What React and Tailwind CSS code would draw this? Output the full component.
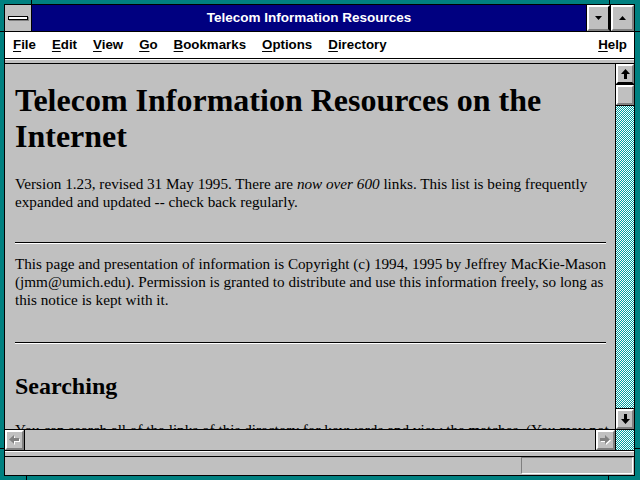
import React from "react";

const serif = { fontFamily: '"Liberation Serif", "Times New Roman", serif' };

function Notch({ className }) {
  return <div className={`absolute bg-black ${className}`} />;
}

function ArrowUp() {
  return (
    <svg width="9" height="10" viewBox="0 0 9 10">
      <polygon points="4.5,0 9,5 6,5 6,10 3,10 3,5 0,5" fill="#000" />
    </svg>
  );
}

function ArrowDown() {
  return (
    <svg width="9" height="10" viewBox="0 0 9 10">
      <polygon points="3,0 6,0 6,5 9,5 4.5,10 0,5 3,5" fill="#000" />
    </svg>
  );
}

function GrayArrow({ dir }) {
  const pts =
    dir === "left"
      ? "0,4.5 5,0 5,3 10,3 10,6 5,6 5,9"
      : "10,4.5 5,0 5,3 0,3 0,6 5,6 5,9";
  return (
    <svg width="11" height="10" viewBox="0 0 11 10">
      <polygon points={pts} fill="#fff" transform="translate(1,1)" />
      <polygon points={pts} fill="#808080" />
    </svg>
  );
}

function Bevel({ className = "", children }) {
  return (
    <div
      className={`flex items-center justify-center bg-[#c0c0c0] border-t-2 border-l-2 border-t-white border-l-white border-b-2 border-r-2 border-b-[#808080] border-r-[#808080] ${className}`}
    >
      {children}
    </div>
  );
}

const menus = [
  ["F", "ile"],
  ["E", "dit"],
  ["V", "iew"],
  ["G", "o"],
  ["B", "ookmarks"],
  ["O", "ptions"],
  ["D", "irectory"],
];

export default function App() {
  return (
    <div className="relative w-[640px] h-[480px] bg-[#008080] pt-[4px] pl-[4px] pr-[5px] pb-[4px]">
      <Notch className="left-[31px] top-0 w-px h-[4px]" />
      <Notch className="left-[609px] top-0 w-px h-[4px]" />
      <Notch className="left-[26px] bottom-0 w-px h-[4px]" />
      <Notch className="left-[608px] bottom-0 w-px h-[4px]" />
      <Notch className="left-0 top-[31px] w-[4px] h-px" />
      <Notch className="left-0 top-[448px] w-[4px] h-px" />
      <Notch className="right-0 top-[31px] w-[5px] h-px" />
      <Notch className="right-0 top-[448px] w-[5px] h-px" />

      <div className="flex h-full flex-col border border-black bg-[#c0c0c0]">
        {/* title bar */}
        <div className="flex h-[27px] border-b border-black">
          <div className="flex w-[27px] items-center justify-center border-r border-black bg-[#c0c0c0]">
            <div className="h-[4px] w-[20px] border border-black bg-white shadow-[1px_1px_0_#808080]" />
          </div>
          <div
            className="flex flex-1 items-center justify-center bg-[#000080] text-[13.5px] font-bold text-white"
            style={{ fontFamily: '"Liberation Sans", Arial, sans-serif' }}
          >
            Telecom Information Resources
          </div>
          <div className="flex border-l border-black">
            <Bevel className="w-[23px] border-r-black">
              <svg width="7" height="4" viewBox="0 0 7 4">
                <polygon points="0,0 7,0 3.5,4" fill="#000" />
              </svg>
            </Bevel>
            <div className="w-px bg-black" />
            <Bevel className="w-[23px]">
              <svg width="7" height="4" viewBox="0 0 7 4">
                <polygon points="0,4 7,4 3.5,0" fill="#000" />
              </svg>
            </Bevel>
          </div>
        </div>

        {/* menu bar */}
        <div
          className="flex h-[27px] items-center border-b border-black bg-white pl-[8px] pr-[7px] text-[13.3px] font-bold text-black"
          style={{ fontFamily: '"Liberation Sans", Arial, sans-serif' }}
        >
          <div className="flex gap-[16px]">
            {menus.map(([u, rest]) => (
              <span key={u + rest}>
                <span className="underline underline-offset-2">{u}</span>
                {rest}
              </span>
            ))}
          </div>
          <span className="ml-auto">
            <span className="underline underline-offset-2">H</span>elp
          </span>
        </div>

        {/* 3d strip */}
        <div className="h-[5px] border-t border-t-white border-b border-b-black bg-[#c0c0c0]" />

        {/* main */}
        <div className="flex h-[366px] border-b border-black">
          <div className="flex-1 overflow-hidden pl-[10px] pr-[9px] text-black" style={serif}>
            <h1 className="mt-[18px] text-[32px] font-bold leading-[36px] whitespace-nowrap">
              Telecom Information Resources on the
              <br />
              Internet
            </h1>
            <p className="mt-[21px] text-[15.2px] leading-[18px] whitespace-nowrap">
              Version 1.23, revised 31 May 1995. There are <i>now over 600</i> links. This list is being frequently
              <br />
              expanded and updated -- check back regularly.
            </p>
            <div className="mt-[31px] h-[2px] border-t border-t-black border-b border-b-white" />
            <p className="mt-[11px] text-[15.2px] leading-[18px] whitespace-nowrap">
              This page and presentation of information is Copyright (c) 1994, 1995 by Jeffrey MacKie-Mason
              <br />
              (jmm@umich.edu). Permission is granted to distribute and use this information freely, so long as
              <br />
              this notice is kept with it.
            </p>
            <div className="mt-[33px] h-[2px] border-t border-t-black border-b border-b-white" />
            <h2 className="mt-[28px] text-[24px] font-bold leading-[28px]">Searching</h2>
            <p className="mt-[21px] text-[15.2px] leading-[18px] whitespace-nowrap">
              You can search all of the links of this directory for keywords and view the matches. (You may not
            </p>
          </div>

          {/* vertical scrollbar */}
          <div className="flex w-[19px] flex-col border-l border-black">
            <Bevel className="h-[20px] border-b-black">
              <ArrowUp />
            </Bevel>
            <div className="h-px bg-black" />
            <Bevel className="h-[20px]" />
            <div className="h-px bg-black" />
            <div className="flex-1 bg-[repeating-conic-gradient(#00a0a0_0_25%,#ffffff_0_50%)] bg-size-[2px_2px]" />
            <div className="h-px bg-black" />
            <Bevel className="h-[20px]">
              <ArrowDown />
            </Bevel>
          </div>
        </div>

        {/* horizontal scrollbar */}
        <div className="flex h-[21px] border-b border-black">
          <Bevel className="w-[19px]">
            <GrayArrow dir="left" />
          </Bevel>
          <div className="w-px bg-black" />
          <div className="flex-1 bg-[#c0c0c0]" />
          <div className="w-px bg-black" />
          <Bevel className="w-[19px]">
            <GrayArrow dir="right" />
          </Bevel>
          <div className="w-px bg-black" />
          <div className="w-[18px] bg-[repeating-conic-gradient(#00a0a0_0_25%,#ffffff_0_50%)] bg-size-[2px_2px]" />
        </div>

        {/* 3d strip */}
        <div className="h-[6px] border-t border-t-white border-b border-b-black bg-[#c0c0c0]" />

        {/* status bar */}
        <div className="flex flex-1 items-start justify-end pr-px">
          <div className="h-[17px] w-[112px] border border-t-[#808080] border-l-[#808080] border-b-white border-r-white" />
        </div>
      </div>
    </div>
  );
}
